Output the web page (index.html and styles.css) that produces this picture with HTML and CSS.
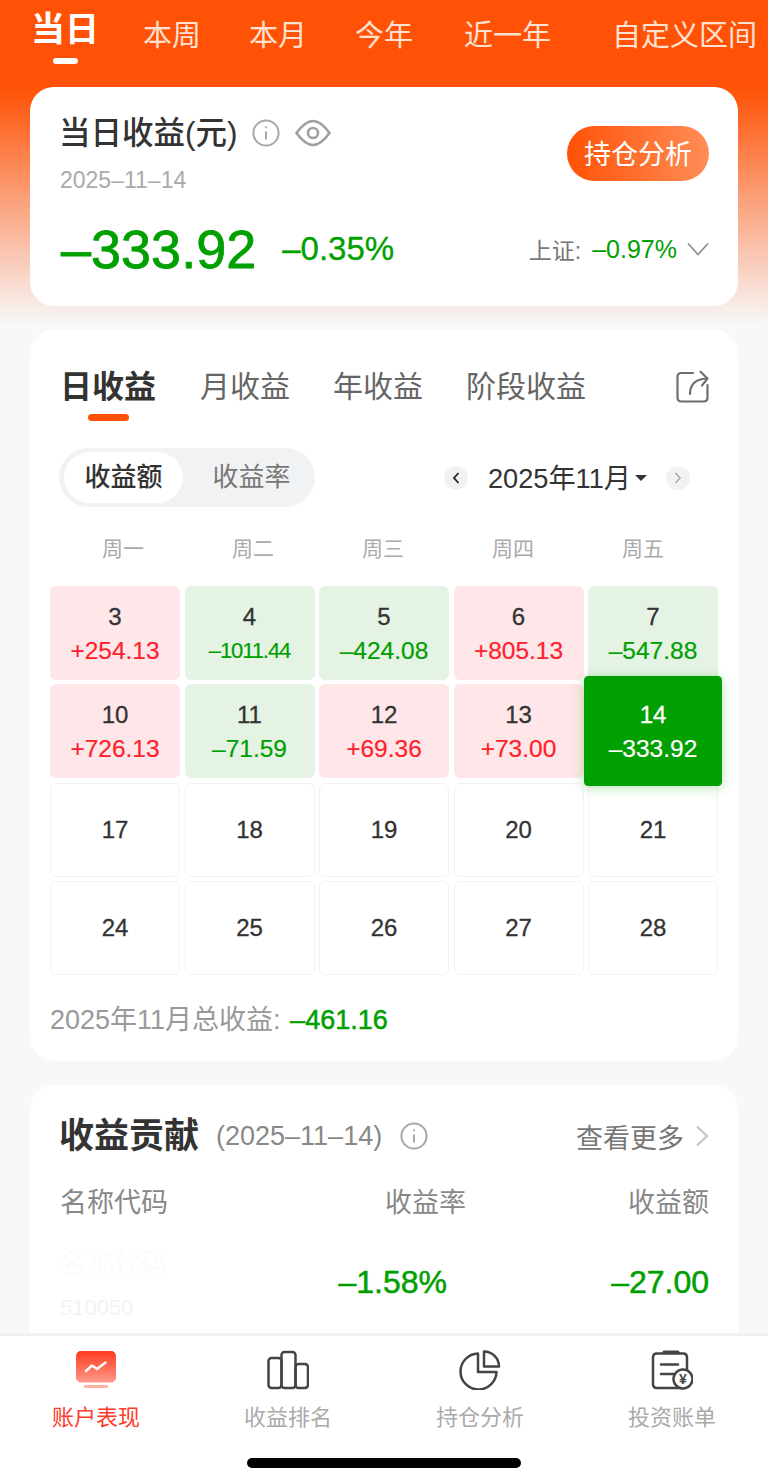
FILE: index.html
```html
<!DOCTYPE html>
<html lang="zh-CN">
<head>
  <meta charset="UTF-8">
  <title>账户表现</title>
  <link rel="stylesheet" href="styles.css">
</head>
<body>
  <div class="page">
    <div class="conteudo">
      <div class="periodos">
        <span class="periodo ativo">当日</span>
        <span class="periodo">本周</span>
        <span class="periodo">本月</span>
        <span class="periodo">今年</span>
        <span class="periodo p-ano">近一年</span>
        <span class="periodo p-custom">自定义区间</span>
      </div>

      <section class="card resumo">
        <div class="resumo-topo">
          <div>
            <div class="resumo-titulo">
              <span>当日收益(元)</span>
              <svg class="ico-info" viewBox="0 0 28 28" fill="none" stroke="#a8a8a8" stroke-width="2"><circle cx="14" cy="14" r="12.6"/><path d="M14 12.5v8"/><circle cx="14" cy="8.3" r="1.1" fill="#a8a8a8" stroke="none"/></svg>
              <svg class="ico-olho" viewBox="0 0 36 28" fill="none" stroke="#a0a0a0" stroke-width="2.6"><path d="M1.5 14C8 5 13 2 18 2s10 3 16.5 12C28 23 23 26 18 26S8 23 1.500 14z"/><circle cx="18" cy="14" r="5"/></svg>
            </div>
            <div class="resumo-data">2025–11–14</div>
          </div>
          <button class="btn-analise">持仓分析</button>
        </div>
        <div class="resumo-base">
          <div class="resumo-valores">
            <span class="valor-grande">–333.92</span>
            <span class="valor-pct">–0.35%</span>
          </div>
          <div class="indice">
            <span class="indice-nome">上证:</span>
            <span class="indice-pct">–0.97%</span>
            <svg class="ico-baixo" viewBox="0 0 22 14" fill="none" stroke="#8a8a8a" stroke-width="1.600"><path d="M1 1.500l10 11 10-11"/></svg>
          </div>
        </div>
      </section>

      <section class="card calendario">
        <div class="abas">
          <span class="aba ativa">日收益</span>
          <span class="aba">月收益</span>
          <span class="aba">年收益</span>
          <span class="aba">阶段收益</span>
          <svg class="ico-share" viewBox="0 0 33 33" fill="none" stroke="#6e6e6e" stroke-width="2.200" stroke-linecap="round" stroke-linejoin="round"><path d="M17 3H5.500Q1.500 3 1.500 7v20.500q0 4 4 4h22q4 0 4-4V15"/><path d="M14 24c0-9 5-15 17-15.500"/><path d="M24.500 1.800L31.500 8.500l-5.500 7"/></svg>
        </div>

        <div class="controles">
          <div class="segmento">
            <span class="seg-item ativo">收益额</span>
            <span class="seg-item">收益率</span>
          </div>
          <div class="mes-nav">
            <span class="seta escura"><svg viewBox="0 0 8 12" fill="none" stroke="#222" stroke-width="1.800"><path d="M6.500 1L2 6l4.500 5"/></svg></span>
            <span class="mes">2025年11月</span>
            <span class="triangulo"></span>
            <span class="seta"><svg viewBox="0 0 8 12" fill="none" stroke="#aaa" stroke-width="1.500"><path d="M1.500 1L6 6l-4.500 5"/></svg></span>
          </div>
        </div>

        <div class="semana">
          <span>周一</span><span>周二</span><span>周三</span><span>周四</span><span>周五</span>
        </div>

        <div class="grade">
          <div class="dia alta"><b>3</b><span>+254.13</span></div>
          <div class="dia baixa"><b>4</b><span class="estreito">–1011.44</span></div>
          <div class="dia baixa"><b>5</b><span>–424.08</span></div>
          <div class="dia alta"><b>6</b><span>+805.13</span></div>
          <div class="dia baixa"><b>7</b><span>–547.88</span></div>
          <div class="dia alta"><b>10</b><span>+726.13</span></div>
          <div class="dia baixa"><b>11</b><span>–71.59</span></div>
          <div class="dia alta"><b>12</b><span>+69.36</span></div>
          <div class="dia alta"><b>13</b><span>+73.00</span></div>
          <div class="dia hoje"><b>14</b><span>–333.92</span></div>
          <div class="dia"><b>17</b></div>
          <div class="dia"><b>18</b></div>
          <div class="dia"><b>19</b></div>
          <div class="dia"><b>20</b></div>
          <div class="dia"><b>21</b></div>
          <div class="dia"><b>24</b></div>
          <div class="dia"><b>25</b></div>
          <div class="dia"><b>26</b></div>
          <div class="dia"><b>27</b></div>
          <div class="dia"><b>28</b></div>
        </div>

        <div class="total">2025年11月总收益: <strong>–461.16</strong></div>
      </section>

      <section class="card contribuicao">
        <div class="contrib-topo">
          <h2>收益贡献</h2>
          <span class="contrib-data">(2025–11–14)</span>
          <svg class="ico-info" viewBox="0 0 28 28" fill="none" stroke="#a8a8a8" stroke-width="2"><circle cx="14" cy="14" r="12.600"/><path d="M14 12.500v8"/><circle cx="14" cy="8.300" r="1.100" fill="#a8a8a8" stroke="none"/></svg>
          <span class="ver-mais">查看更多</span>
          <svg class="ico-direita" viewBox="0 0 14 22" fill="none" stroke="#c8c8c8" stroke-width="2.400"><path d="M2 1.500L12 11 2 20.500"/></svg>
        </div>
        <div class="tabela-cab">
          <span>名称代码</span>
          <span class="col-taxa">收益率</span>
          <span class="col-valor">收益额</span>
        </div>
        <div class="tabela-linha">
          <div class="nome-oculto">
            <span>名称代码</span>
            <small>510050</small>
          </div>
          <span class="linha-taxa">–1.58%</span>
          <span class="linha-valor">–27.00</span>
        </div>
      </section>
    </div>

    <nav class="menu">
      <div class="menu-itens">
        <div class="menu-item ativo">
          <svg viewBox="0 0 42 40"><defs><linearGradient id="grad-tela" x1="0" y1="0" x2="0" y2="1"><stop offset="0" stop-color="#ff3a20"/><stop offset="1" stop-color="#ff9a8a"/></linearGradient></defs><rect x="1" y="1" width="40" height="31.500" rx="5" fill="url(#grad-tela)"/><rect x="9" y="35" width="24" height="3" rx="1" fill="#ffb0a4"/><path d="M11 21l6-5.500 5 3.500 8.500-6.500" fill="none" stroke="#fff" stroke-width="2.400" stroke-linecap="round" stroke-linejoin="round"/></svg>
          <span>账户表现</span>
        </div>
        <div class="menu-item">
          <svg viewBox="0 0 42 40" fill="none" stroke="#444" stroke-width="2.500" stroke-linejoin="round"><rect x="1.500" y="8" width="13" height="30" rx="3"/><rect x="14.500" y="2" width="14" height="36" rx="3"/><rect x="28.500" y="14" width="12.500" height="24" rx="3"/></svg>
          <span>收益排名</span>
        </div>
        <div class="menu-item">
          <svg viewBox="0 0 42 40" fill="none" stroke="#444" stroke-width="2.500" stroke-linejoin="round"><path d="M19 3.500A18 18 0 1 0 37.500 22H19z"/><path d="M25 1.500A15 15 0 0 1 40 16.500H25z"/></svg>
          <span>持仓分析</span>
        </div>
        <div class="menu-item">
          <svg viewBox="0 0 42 40" fill="none" stroke="#444" stroke-width="2.500" stroke-linecap="round"><path d="M6 3.500h26q4 0 4 4V30q0 8-4 8H6q-4 0-4-4V7.500q0-4 4-4z"/><path d="M13 2h14" stroke-width="3"/><path d="M10 14.500h17M10 24h19"/><circle cx="32" cy="29" r="9.500" fill="#fff"/><text class="yen" x="32" y="34" text-anchor="middle">¥</text></svg>
          <span>投资账单</span>
        </div>
      </div>
      <div class="indicador"></div>
    </nav>
  </div>
</body>
</html>
```

FILE: styles.css
```css
* {
  box-sizing: border-box;
}

body {
  margin: 0;
  font-family: "Liberation Sans", "Noto Sans CJK SC", sans-serif;
  color: #333;
  background-color: #fff;
}

.page {
  display: flex;
  flex-direction: column;
  height: 1483px;
  overflow: hidden;
}

.conteudo {
  flex: 1;
  min-height: 0;
  overflow: hidden;
  padding: 0 30px;
  background: linear-gradient(#ff5206 88px, #f7f8fa 325px);
}

/* periodos */
.periodos {
  display: flex;
  align-items: flex-start;
  gap: 48px;
  height: 87px;
  padding: 13px 0 0 1px;
  white-space: nowrap;
}

.periodo {
  font-size: 29px;
  line-height: 40px;
  margin-top: 3px;
  color: #ffe1d2;
}

.periodo.ativo {
  display: flex;
  flex-direction: column;
  align-items: center;
  margin: -3px -4px 0 0;
  font-size: 34px;
  line-height: 38px;
  font-weight: bold;
  color: #fff;
}

.periodo.ativo::after {
  content: "";
  width: 25px;
  height: 6px;
  margin-top: 10px;
  border-radius: 3px;
  background-color: #fff;
}

.p-ano {
  margin-left: 3px;
}

.p-custom {
  margin-left: 13px;
}

.card {
  background-color: #fff;
  border-radius: 24px;
  margin-bottom: 24px;
}

/* resumo */
.resumo {
  height: 219px;
  padding: 26px 29px 0 30px;
}

.resumo-topo {
  display: flex;
  justify-content: space-between;
}

.resumo-titulo {
  display: flex;
  align-items: center;
  margin-left: -1px;
  font-size: 31.500px;
  line-height: 40px;
  font-weight: 500;
}

.ico-info {
  width: 28px;
  height: 28px;
  margin-left: 15px;
}

.ico-olho {
  width: 36px;
  height: 28px;
  margin-left: 15px;
}

.resumo-data {
  margin-top: 12px;
  font-size: 23px;
  line-height: 30px;
  color: #aaa;
}

.btn-analise {
  width: 142px;
  height: 55px;
  margin-top: 13px;
  padding: 0 0 3px;
  border: none;
  border-radius: 28px;
  background: linear-gradient(90deg, #ff5206, #ff8d57);
  color: #fff;
  font-family: inherit;
  font-size: 27px;
}

.resumo-base {
  display: flex;
  justify-content: space-between;
  align-items: center;
  height: 60px;
  margin-top: 24px;
}

.resumo-valores {
  display: flex;
  align-items: center;
  margin-left: 1px;
}

.valor-grande {
  font-size: 54px;
  -webkit-text-stroke: 0.8px #00a000;
  color: #00a000;
}

.valor-pct {
  margin-left: 26px;
  font-size: 33px;
  -webkit-text-stroke: 0.3px #00a000;
  color: #00a000;
}

.indice {
  display: flex;
  align-items: center;
}

.indice-nome {
  font-size: 23px;
  color: #777;
}

.indice-pct {
  margin-left: 11px;
  font-size: 25px;
  color: #00a000;
}

.ico-baixo {
  width: 22px;
  height: 14px;
  margin-left: 10px;
}

/* calendario */
.calendario {
  height: 731px;
  margin-bottom: 24px;
  padding: 37px 20px 0;
}

.abas {
  display: flex;
  align-items: flex-start;
  gap: 43px;
  padding: 0 9px 0 10px;
  height: 81px;
}

.aba {
  font-size: 30px;
  line-height: 40px;
  color: #666;
}

.aba.ativa {
  display: flex;
  flex-direction: column;
  align-items: center;
  margin-right: 1px;
  font-size: 32px;
  font-weight: bold;
  color: #333;
}

.aba.ativa::after {
  content: "";
  width: 41px;
  height: 7px;
  margin-top: 7px;
  border-radius: 4px;
  background-color: #ff5206;
}

.ico-share {
  width: 33px;
  height: 33px;
  margin: 3px 0 0 auto;
}

.controles {
  display: flex;
  justify-content: space-between;
  align-items: center;
  padding: 0 28px 0 9px;
}

.segmento {
  display: flex;
  align-items: center;
  width: 256px;
  height: 59px;
  padding: 4px 5px;
  border-radius: 30px;
  background-color: #f1f2f4;
}

.seg-item {
  flex: 1;
  padding-left: 10px;
  text-align: center;
  font-size: 26px;
  line-height: 51px;
  color: #777;
}

.seg-item.ativo {
  flex: 0 0 119px;
  height: 51px;
  padding-left: 0;
  border-radius: 26px;
  background-color: #fff;
  font-weight: 500;
  color: #333;
}

.mes-nav {
  display: flex;
  align-items: center;
}

.seta {
  display: flex;
  align-items: center;
  justify-content: center;
  width: 24px;
  height: 24px;
  border-radius: 50%;
  background-color: #f1f2f4;
}

.seta svg {
  width: 8px;
  height: 12px;
}

.mes {
  margin: -3px 0 0 20px;
  font-size: 27.200px;
}

.triangulo {
  width: 0;
  height: 0;
  margin: 0 19px 0 4px;
  border-left: 6px solid transparent;
  border-right: 6px solid transparent;
  border-top: 6px solid #333;
}

.semana {
  display: flex;
  margin-top: 27px;
  padding-left: 8px;
}

.semana span {
  width: 130px;
  text-align: center;
  font-size: 21px;
  line-height: 30px;
  color: #aaa;
}

.grade {
  display: grid;
  grid-template-columns: repeat(5, 1fr);
  grid-auto-rows: 94px;
  gap: 4.300px 4.500px;
  margin-top: 22px;
}

.dia {
  display: flex;
  flex-direction: column;
  align-items: center;
  justify-content: center;
  padding-top: 1px;
  border: 1px solid #f3f3f3;
  border-radius: 6px;
}

.dia b {
  font-size: 24px;
  line-height: 34px;
  font-weight: normal;
  -webkit-text-stroke: 0.3px #333;
  color: #333;
}

.dia span {
  font-size: 24.500px;
  line-height: 34px;
  -webkit-text-stroke: 0.2px currentColor;
}

.dia span.estreito {
  font-size: 22px;
  letter-spacing: -1.100px;
}

.dia.alta {
  background-color: #ffe6e8;
  border-color: #ffe6e8;
  color: #ff1f2d;
}

.dia.baixa {
  background-color: #e5f3e5;
  border-color: #e5f3e5;
  color: #00a000;
}

.dia.hoje {
  position: relative;
  z-index: 1;
  margin: -8px -4px;
  background-color: #00a000;
  border-color: #00a000;
  border-radius: 4px;
  box-shadow: 0 2px 12px rgba(0, 160, 0, 0.3);
  color: #fff;
}

.dia.hoje b {
  -webkit-text-stroke: 0.3px #fff;
  color: #fff;
}

.total {
  margin-top: 27px;
  font-size: 27px;
  line-height: 36px;
  color: #999;
}

.total strong {
  margin-left: 2px;
  font-weight: normal;
  -webkit-text-stroke: 0.5px #00a000;
  color: #00a000;
}

/* contribuicao */
.contribuicao {
  height: 400px;
  margin-bottom: 0;
  padding: 28px 29px 0 30px;
}

.contrib-topo {
  display: flex;
  align-items: center;
  height: 46px;
}

.contrib-topo h2 {
  margin: 0 0 0 -1px;
  font-size: 35px;
  line-height: 46px;
  font-weight: bold;
}

.contrib-data {
  margin-left: 17px;
  font-size: 27px;
  color: #888;
}

.contrib-topo .ico-info {
  margin-left: 18px;
}

.ver-mais {
  margin-left: auto;
  font-size: 27px;
  color: #777;
}

.ico-direita {
  width: 14px;
  height: 22px;
  margin-left: 11px;
}

.tabela-cab {
  display: flex;
  align-items: center;
  margin-top: 24px;
  font-size: 27px;
  line-height: 40px;
  color: #888;
}

.col-taxa {
  margin-left: auto;
}

.col-valor {
  width: 243px;
  text-align: right;
}

.tabela-linha {
  display: flex;
  align-items: center;
  margin-top: 23px;
}

.nome-oculto {
  display: flex;
  flex-direction: column;
  gap: 11px;
  font-size: 27px;
  line-height: 36px;
  color: #fbfbfb;
}

.nome-oculto small {
  font-size: 22px;
  line-height: 30px;
  color: #f3f3f3;
}

.linha-taxa {
  margin: 0 0 5px auto;
  font-size: 32px;
  -webkit-text-stroke: 0.5px #00a000;
  color: #00a000;
}

.linha-valor {
  width: 262px;
  margin-bottom: 5px;
  text-align: right;
  font-size: 32px;
  -webkit-text-stroke: 0.5px #00a000;
  color: #00a000;
}

/* menu */
.menu {
  flex: 0 0 150px;
  position: relative;
  z-index: 2;
  border-top: 3px solid #f0f1f3;
  background-color: #fff;
}

.menu-itens {
  display: grid;
  grid-template-columns: repeat(4, 1fr);
  padding-top: 14px;
}

.menu-item {
  display: flex;
  flex-direction: column;
  align-items: center;
  font-size: 22px;
  line-height: 30px;
  color: #aaa;
}

.menu-item svg {
  width: 42px;
  height: 40px;
}

.menu-item span {
  margin-top: 13px;
}

.menu-item.ativo {
  color: #ff3b2a;
}

.yen {
  font-size: 14px;
  font-weight: bold;
  fill: #444;
  stroke: none;
}

.indicador {
  width: 274px;
  height: 10px;
  margin: 25px auto 0;
  border-radius: 5px;
  background-color: #000;
}
```
